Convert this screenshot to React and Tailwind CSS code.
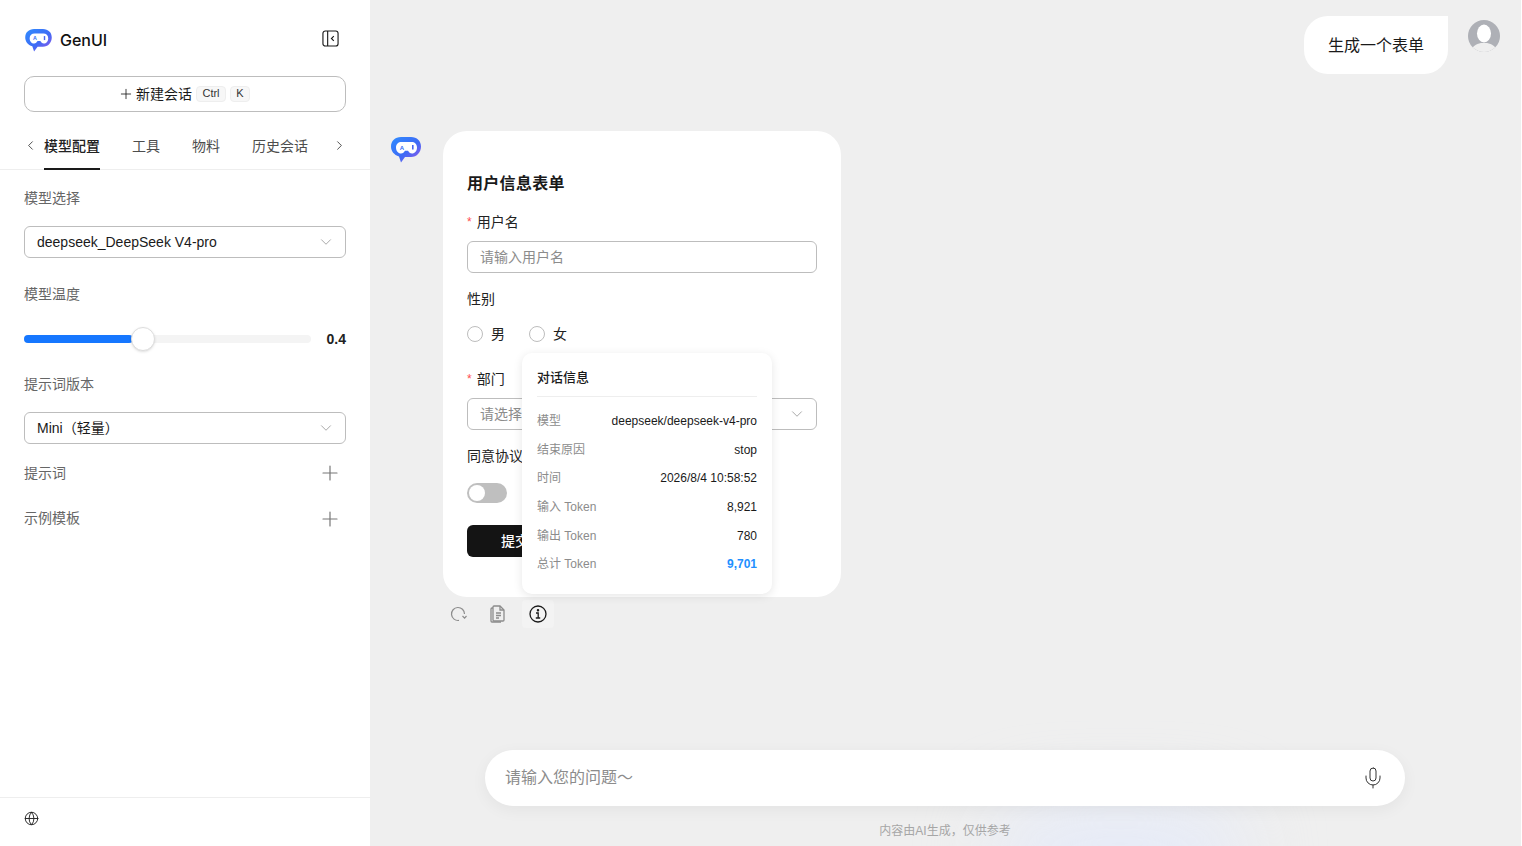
import React from "react";
import { ChevronDown, ChevronLeft, ChevronRight, Plus, Mic, Globe } from "lucide-react";

const font = "font-['Liberation_Sans','Noto_Sans_CJK_SC',sans-serif]";

const Logo = ({ className, id }) => (
  <svg viewBox="0 0 30 26" className={className}>
    <defs>
      <linearGradient id={id} x1="0" y1="0" x2="1" y2="1">
        <stop offset="0" stopColor="#2f8cff" />
        <stop offset="0.55" stopColor="#3f6bf5" />
        <stop offset="1" stopColor="#9a55e8" />
      </linearGradient>
    </defs>
    <path
      d="M10 0h10c6 0 10 4 10 9.500S26 20 20 20h-6l-4 5.500-2-6C3 18 0 14 0 9.500 0 4 4 0 10 0z"
      fill={`url(#${id})`}
    />
    <path
      d="M10.500 5h10c3.200 0 5.500 2 5.500 5.500 0 3.500-2.200 6-5 6-2 0-3-1.500-4-2.800h-3c-1 1.300-2 2.800-4 2.800-2.800 0-5-2.500-5-6C5 7 7.300 5 10.500 5z"
      fill="#fff"
    />
    <text x="11" y="12.500" fontSize="6" fontWeight="700" textAnchor="middle" fill="#2f6bf5" fontFamily="Liberation Sans">A</text>
    <rect x="21" y="8" width="1.600" height="4.500" fill="#4a66f0" />
  </svg>
);

const SelectBox = ({ text }) => (
  <div className="flex h-8 items-center justify-between rounded-md border border-[#bdbdbd] bg-white pl-3 pr-[10px] text-sm text-[#1a1a1a]">
    <span>{text}</span>
    <ChevronDown size={18} strokeWidth={1} className="text-[#8c8c8c]" />
  </div>
);

const SideLabel = ({ children, className = "" }) => (
  <div className={`text-sm leading-[22px] text-[#666] ${className}`}>{children}</div>
);

const Kbd = ({ children, className = "" }) => (
  <span className={`flex h-4 items-center justify-center rounded border border-[#eee] bg-[#f7f7f7] text-[11px] text-[#333] ${className}`}>
    {children}
  </span>
);

const Sidebar = () => (
  <aside className="flex h-full w-[370px] shrink-0 flex-col bg-white">
    <div className="flex h-[76px] items-center justify-between pl-[25px] pr-[31px] pt-1">
      <div className="flex items-center gap-[8px]">
        <Logo id="logo-side" className="h-[23px] w-[27px]" />
        <span className="font-['Inter',sans-serif] text-base font-medium text-[#111]">GenUI</span>
      </div>
      <svg viewBox="0 0 18 18" className="mb-[3px] h-[17px] w-[17px]" fill="none" stroke="#1a1a1a" strokeWidth="1.2">
        <rect x="1" y="1" width="16" height="16" rx="2.500" />
        <path d="M6 1v16M12.500 6.500 10 9l2.500 2.500" />
      </svg>
    </div>
    <div className="px-6">
      <div className="flex h-9 items-center justify-center rounded-[10px] border border-[#bdbdbd] pr-[2px] text-sm text-[#1a1a1a]">
        <Plus size={16} strokeWidth={1.25} className="mr-[2px]" />
        <span>新建会话</span>
        <Kbd className="ml-[4px] w-[30px]">Ctrl</Kbd>
        <Kbd className="ml-[4px] w-[20px]">K</Kbd>
      </div>
    </div>
    <div className="mt-[16px] flex h-[42px] items-stretch border-b border-[#eee] px-6 pb-[6px] text-sm text-[#4d4d4d]">
      <div className="flex w-[20px] items-center">
        <ChevronLeft size={15} strokeWidth={1.25} className="-ml-px shrink-0 text-[#222]" />
      </div>
      <div className="relative flex items-center font-medium text-[#222]">
        模型配置
        <span className="absolute inset-x-0 bottom-[-7px] h-[2px] bg-[#1a1a1a]" />
      </div>
      <div className="ml-8 flex items-center">工具</div>
      <div className="ml-8 flex items-center">物料</div>
      <div className="ml-8 flex items-center">历史会话</div>
      <div className="ml-auto flex w-[14px] items-center justify-end">
        <ChevronRight size={15} strokeWidth={1.25} className="-mr-px shrink-0 text-[#222]" />
      </div>
    </div>
    <div className="flex-1 px-6">
      <SideLabel className="mt-[17px]">模型选择</SideLabel>
      <div className="mt-[17px]">
        <SelectBox text="deepseek_DeepSeek V4-pro" />
      </div>
      <SideLabel className="mt-[25px]">模型温度</SideLabel>
      <div className="mt-[22px] flex h-6 items-center">
        <div className="relative h-2 w-[287px] rounded-full bg-[#f4f4f4]">
          <div className="h-2 w-[109px] rounded-full bg-[#1677ff]" />
          <div className="absolute left-[107px] top-[-8px] h-6 w-6 rounded-full border border-[#ddd] bg-white shadow-sm" />
        </div>
        <span className="ml-auto text-sm font-bold text-[#222]">0.4</span>
      </div>
      <SideLabel className="mt-[22px]">提示词版本</SideLabel>
      <div className="mt-[17px]">
        <SelectBox text="Mini（轻量）" />
      </div>
      <div className="mt-[18px] flex items-center justify-between pr-[4px]">
        <SideLabel>提示词</SideLabel>
        <Plus size={24} strokeWidth={1.2} className="my-[-1px] text-[#777]" />
      </div>
      <div className="mt-[23px] flex items-center justify-between pr-[4px]">
        <SideLabel>示例模板</SideLabel>
        <Plus size={24} strokeWidth={1.2} className="mb-[-2px] mt-0 text-[#777]" />
      </div>
    </div>
    <div className="flex h-[49px] items-center border-t border-[#eee] px-6 pb-2">
      <Globe size={15} strokeWidth={1.5} className="text-[#222]" />
    </div>
  </aside>
);

const FormLabel = ({ required, children, className = "" }) => (
  <div className={`flex items-center text-sm leading-[22px] text-[#222] ${className}`}>
    {required && <span className="mr-[5px] text-xs text-[#ff4d4f]">*</span>}
    {children}
  </div>
);

const Radio = ({ label }) => (
  <div className="flex items-center gap-2 text-sm text-[#222]">
    <span className="h-4 w-4 rounded-full border border-[#bdbdbd] bg-white" />
    {label}
  </div>
);

const InfoRow = ({ label, value, valueClass = "text-[#1a1a1a]" }) => (
  <div className="flex h-[28.600px] items-center justify-between text-xs">
    <span className="text-[#8c8c8c]">{label}</span>
    <span className={valueClass}>{value}</span>
  </div>
);

const InfoPopover = () => (
  <div className="absolute left-[79px] top-[222px] z-10 h-[241px] w-[250px] rounded-[10px] bg-white px-[15px] shadow-[0_2px_10px_rgba(0,0,0,0.1)]">
    <div className="flex h-[44px] items-center border-b border-[#eee] pt-[6px] text-[13px] font-medium leading-none text-[#1a1a1a]">对话信息</div>
    <div className="mt-[10px]">
      <InfoRow label="模型" value="deepseek/deepseek-v4-pro" />
      <InfoRow label="结束原因" value="stop" />
      <InfoRow label="时间" value="2026/8/4 10:58:52" />
      <InfoRow label="输入 Token" value="8,921" />
      <InfoRow label="输出 Token" value="780" />
      <InfoRow label="总计 Token" value="9,701" valueClass="font-bold text-[#1e90ff]" />
    </div>
  </div>
);

const FormCard = () => (
  <div className="relative">
    <div className="h-[466px] w-[398px] rounded-[24px] bg-white px-6 pt-[41px]">
      <div className="text-base font-semibold leading-6 tracking-[0.3px] text-[#1a1a1a]">用户信息表单</div>
      <FormLabel required className="mt-[15px]">用户名</FormLabel>
      <div className="mt-[8px] flex h-8 items-center rounded-md border border-[#bdbdbd] px-3 text-sm text-[#8c8c8c]">请输入用户名</div>
      <FormLabel className="mt-[15px]">性别</FormLabel>
      <div className="mt-[13px] flex h-[22px] items-center gap-6">
        <Radio label="男" />
        <Radio label="女" />
      </div>
      <FormLabel required className="mt-[23px]">部门</FormLabel>
      <div className="mt-[8px] flex h-8 items-center justify-between rounded-md border border-[#bdbdbd] pl-3 pr-[10px] text-sm text-[#8c8c8c]">
        请选择部门
        <ChevronDown size={18} strokeWidth={1} className="text-[#8c8c8c]" />
      </div>
      <FormLabel className="mt-[15px]">同意协议</FormLabel>
      <div className="mt-[16px] flex h-5 w-10 items-center rounded-full bg-[#bfbfbf] pl-[2px]">
        <span className="h-4 w-4 rounded-full bg-white" />
      </div>
      <div className="mt-[22px] flex h-8 w-24 items-center justify-center rounded-md bg-[#141414] text-sm font-medium text-white">提交</div>
    </div>
    <InfoPopover />
    <div className="mt-[3px] flex items-center text-[#8c8c8c]">
      <div className="flex h-7 w-[31px] items-center justify-center">
        <svg viewBox="0 0 17 16" className="h-4 w-[17px]" fill="none" stroke="currentColor" strokeWidth="1.200">
          <path d="M14.500 8A6.500 6.500 0 1 0 9 14.400" />
          <path d="M12.500 10l2.100 2.100L16.500 10" />
        </svg>
      </div>
      <div className="ml-[10px] flex h-7 w-7 items-center justify-center">
        <svg viewBox="0 0 16 18" className="h-[18px] w-4" fill="none" stroke="currentColor" strokeWidth="1.300">
          <path d="M4 1h6l4 4v10a1 1 0 0 1-1 1H4a1 1 0 0 1-1-1V2a1 1 0 0 1 1-1z" />
          <path d="M3 3H2a1 1 0 0 0-1 1v12a1 1 0 0 0 1 1h9" />
          <path d="M6 8h5M6 10.500h5M6 13h3M10 1v4h4" />
        </svg>
      </div>
      <div className="ml-[10px] flex h-7 w-8 items-center justify-center rounded bg-[#f3f3f3] text-[#1a1a1a]">
        <svg viewBox="0 0 18 18" className="h-[18px] w-[18px]" fill="none" stroke="currentColor" strokeWidth="1.300">
          <circle cx="9" cy="9" r="8" />
          <path d="M7 8h2.200v5M6.800 13h4.400" />
          <circle cx="9" cy="5.300" r="0.600" fill="currentColor" />
        </svg>
      </div>
    </div>
  </div>
);

const Avatar = () => (
  <svg viewBox="0 0 32 32" className="h-8 w-8">
    <clipPath id="avatar-clip"><circle cx="16" cy="16" r="16" /></clipPath>
    <g clipPath="url(#avatar-clip)">
      <rect width="32" height="32" fill="#aeb0b6" />
      <ellipse cx="16" cy="13.500" rx="7" ry="9" fill="#fff" />
      <path d="M3 32c1-6 5-8 10-9h6c5 1 9 3 10 9z" fill="#efefef" />
    </g>
  </svg>
);

const Main = () => (
  <main className="relative flex h-full flex-1 flex-col overflow-hidden bg-[#efefef]">
    <div className="flex-1 pl-[21px] pr-[21px] pt-4">
      <div className="flex justify-end">
        <div className="flex h-[58px] w-[144px] items-center justify-center rounded-[24px] rounded-tr-none bg-white pt-[2px] text-base text-[#1a1a1a]">生成一个表单</div>
        <div className="ml-5 mt-1">
          <Avatar />
        </div>
      </div>
      <div className="mt-[57px] flex">
        <Logo id="logo-chat" className="mt-[6px] h-[26px] w-[30px] shrink-0" />
        <div className="ml-[22px]">
          <FormCard />
        </div>
      </div>
    </div>
    <div className="relative flex flex-col items-center pr-px">
      <div className="absolute bottom-[-50px] left-[630px] h-[80px] w-[240px] rounded-full bg-[#e4eafa] blur-2xl" />
      <div className="relative flex h-14 w-[920px] items-center justify-between rounded-[28px] bg-white pl-5 pr-5 text-base text-[#8c8c8c] shadow-[0_4px_16px_rgba(0,0,0,0.05)]">
        请输入您的问题～
        <Mic size={24} strokeWidth={1} className="text-[#333]" />
      </div>
      <div className="relative mb-[6px] mt-4 text-xs leading-[18px] text-[#a6a6a6]">内容由AI生成，仅供参考</div>
    </div>
  </main>
);

export default function App() {
  return (
    <div className={`flex h-screen w-full overflow-hidden bg-white pr-px ${font}`}>
      <Sidebar />
      <Main />
    </div>
  );
}
